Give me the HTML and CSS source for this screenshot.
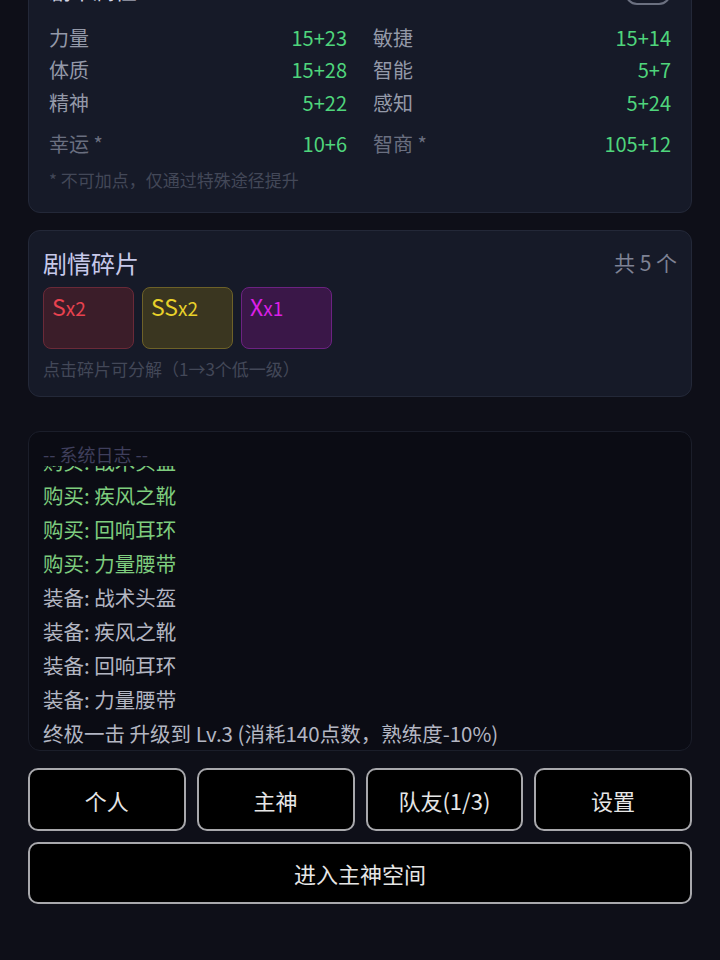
FILE: index.html
```html
<!DOCTYPE html>
<html lang="zh-CN">
<head>
    <meta charset="UTF-8">
    <meta name="viewport" content="width=device-width, initial-scale=1.0">
    <title>主神空间</title>
    <link rel="stylesheet" href="styles.css">
</head>
<body>
    <!-- 属性面板 -->
    <div class="card stats-card">
        <div class="card-head">
            <span class="head-title">剧本属性</span>
            <span class="head-sub">Lv.3 ·</span>
            <span class="head-gold">积分</span>
            <span class="head-sub2">+0</span>
            <span class="head-btn">+</span>
        </div>
        <div class="stats">
            <div class="stat"><span class="label">力量</span><span class="val">15+23</span></div>
            <div class="stat"><span class="label">敏捷</span><span class="val">15+14</span></div>
            <div class="stat"><span class="label">体质</span><span class="val">15+28</span></div>
            <div class="stat"><span class="label">智能</span><span class="val">5+7</span></div>
            <div class="stat"><span class="label">精神</span><span class="val">5+22</span></div>
            <div class="stat"><span class="label">感知</span><span class="val">5+24</span></div>
            <div class="stat special"><span class="label">幸运 *</span><span class="val">10+6</span></div>
            <div class="stat special"><span class="label">智商 *</span><span class="val">105+12</span></div>
        </div>
        <div class="note">* 不可加点，仅通过特殊途径提升</div>
    </div>

    <!-- 剧情碎片 -->
    <div class="card shard-card">
        <div class="shard-head">
            <span class="shard-title">剧情碎片</span>
            <span class="shard-count">共 5 个</span>
        </div>
        <div class="shards">
            <div class="shard shard-s">S<small>x2</small></div>
            <div class="shard shard-ss">SS<small>x2</small></div>
            <div class="shard shard-x">X<small>x1</small></div>
        </div>
        <div class="hint">点击碎片可分解（1→3个低一级）</div>
    </div>

    <!-- 系统日志 -->
    <div class="card log-card">
        <div class="log-title">-- 系统日志 --</div>
        <div class="log">
            <div class="line buy">购买: 回响耳环</div>
            <div class="line buy">购买: 战术头盔</div>
            <div class="line buy">购买: 疾风之靴</div>
            <div class="line buy">购买: 回响耳环</div>
            <div class="line buy">购买: 力量腰带</div>
            <div class="line">装备: 战术头盔</div>
            <div class="line">装备: 疾风之靴</div>
            <div class="line">装备: 回响耳环</div>
            <div class="line">装备: 力量腰带</div>
            <div class="line">终极一击 升级到 Lv.3 (消耗140点数，熟练度-10%)</div>
        </div>
    </div>

    <div class="nav">
        <button class="btn">个人</button>
        <button class="btn">主神</button>
        <button class="btn">队友(1/3)</button>
        <button class="btn">设置</button>
    </div>
    <button class="btn btn-wide">进入主神空间</button>
</body>
</html>
```

FILE: styles.css
```css
body {
    margin: 0;
    padding: 0 28px;
    background-color: #0e0f18;
    font-family: "Noto Sans CJK SC", "Noto Sans", sans-serif;
    color: #c8ccd8;
    overflow: hidden;
}
.card {
    background-color: #161a28;
    border: 1px solid #232838;
    border-radius: 12px;
    box-sizing: border-box;
}
/* 属性面板 */
.stats-card {
    margin-top: -48px;
    padding: 20px 20px 20px;
}
.card-head {
    display: flex;
    align-items: center;
    height: 32px;
    margin-bottom: 16px;
}
.head-title {
    font-size: 22px;
    color: #d4d6e6;
    width: 186px;
}
.head-sub {
    font-size: 15px;
    color: #6b7080;
}
.head-gold {
    margin-left: auto;
    font-size: 15px;
    color: #d9c23a;
}
.head-sub2 {
    margin-left: 30px;
    font-size: 15px;
    color: #6b7080;
}
.head-btn {
    margin-left: 18px;
    width: 42px;
    height: 28px;
    border: 2px solid #6b7080;
    border-radius: 12px;
    display: flex;
    align-items: center;
    justify-content: center;
    color: #9ca0b0;
    font-size: 16px;
}
.stats {
    display: grid;
    grid-template-columns: 1fr 1fr;
    column-gap: 26px;
}
.stat {
    display: flex;
    justify-content: space-between;
    align-items: center;
    height: 32.5px;
    font-size: 20px;
}
.stat.special {
    margin-top: 9px;
}
.label {
    color: #9499a8;
}
.special .label {
    color: #6a6f80;
}
.val {
    color: #4fd57c;
}
.note {
    margin-top: 8px;
    font-size: 17px;
    line-height: 24px;
    color: #434858;
}
/* 剧情碎片 */
.shard-card {
    margin-top: 17px;
    padding: 14px 14px 15px;
}
.shard-head {
    display: flex;
    justify-content: space-between;
    align-items: center;
    height: 34px;
}
.shard-title {
    font-size: 24px;
    color: #c7c9ea;
}
.shard-count {
    font-size: 21px;
    color: #7e8294;
}
.shards {
    display: flex;
    gap: 8px;
    margin-top: 8px;
}
.shard {
    width: 91px;
    height: 62px;
    box-sizing: border-box;
    border-radius: 8px;
    padding: 3px 8px;
    font-size: 23px;
    line-height: 30px;
}
.shard small {
    font-size: 19px;
}
.shard-s {
    color: #e8424f;
    background-color: #3b1d29;
    border: 1px solid #6a2a38;
}
.shard-ss {
    color: #e8d12a;
    background-color: #3a3620;
    border: 1px solid #6d6128;
}
.shard-x {
    color: #dc1fe6;
    background-color: #3a1748;
    border: 1px solid #6c2281;
}
.hint {
    margin-top: 8px;
    font-size: 17px;
    line-height: 24px;
    color: #434858;
}
/* 系统日志 */
.log-card {
    margin-top: 34px;
    background-color: #0b0c14;
    border-color: #1b1e2a;
    padding: 10px 14px 0;
}
.log-title {
    font-size: 18px;
    line-height: 24px;
    color: #3f3f5c;
}
.log {
    height: 284px;
    overflow: hidden;
    display: flex;
    flex-direction: column;
    justify-content: flex-end;
}
.line {
    flex: none;
    font-size: 20.5px;
    line-height: 34px;
    color: #b3b6c2;
    white-space: nowrap;
}
.line.buy {
    color: #7ecd7e;
}
/* 按钮 */
.nav {
    display: grid;
    grid-template-columns: repeat(4, 1fr);
    gap: 11px;
    margin-top: 17px;
}
.btn {
    height: 63px;
    background-color: #000;
    border: 2px solid #a8a8ac;
    border-radius: 10px;
    color: #e6e6e6;
    font-family: "Noto Sans CJK SC", "Noto Sans", sans-serif;
    font-size: 22px;
    cursor: pointer;
}
.btn-wide {
    display: block;
    width: 100%;
    height: 62px;
    margin-top: 11px;
}
```
